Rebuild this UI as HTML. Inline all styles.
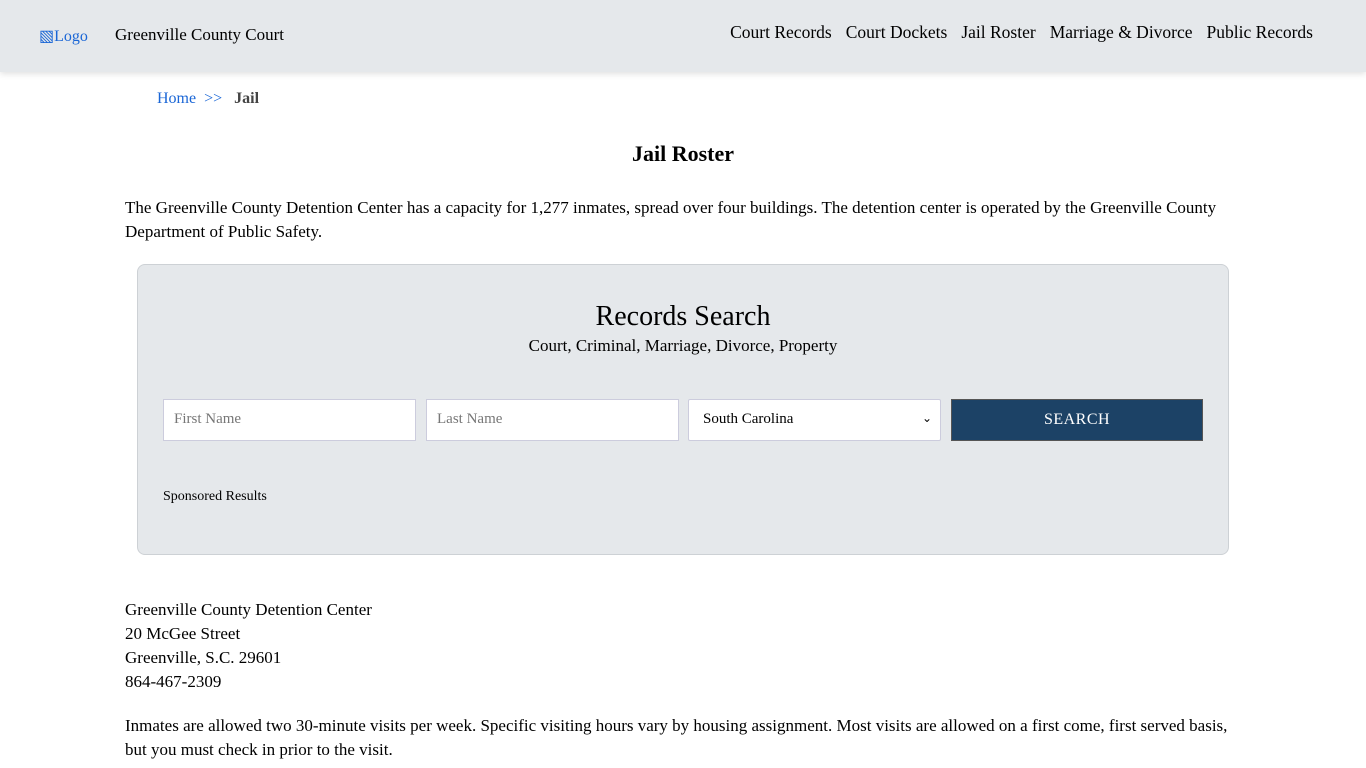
<!DOCTYPE html>
<html><head><meta charset="utf-8"><style>
*{box-sizing:border-box;margin:0;padding:0}
body{width:1366px;height:768px;overflow:hidden;background:#fff;font-family:"Liberation Serif",serif;color:#000;position:relative}
.hdr{position:absolute;left:0;top:0;width:1366px;height:72px;background:#e5e8eb;box-shadow:0 2px 6px rgba(0,0,0,.12)}
.abs{position:absolute;white-space:nowrap}
.nav a{color:#000;text-decoration:none;font-size:17.5px;margin-left:14px}
p{font-size:17px;line-height:24px}
.box{position:absolute;left:137px;top:264px;width:1092px;height:291px;background:#e5e8eb;border:1px solid #cdd1d5;border-radius:8px}
.inp{position:absolute;top:134px;width:253px;height:42px;background:#fff;border:1px solid #ccd;font-size:15px;color:#777;padding:11px 10px}
</style></head><body>
<div class="hdr">
<span class="abs" style="left:39px;top:26px;font-size:16px;color:#1a66d6">&#9639;Logo</span>
<span class="abs" style="left:115px;top:25px;font-size:17px">Greenville County Court</span>
<div class="abs nav" style="right:53px;top:22px"><a>Court Records</a><a>Court Dockets</a><a>Jail Roster</a><a>Marriage &amp; Divorce</a><a>Public Records</a></div>
</div>
<div class="abs" style="left:157px;top:90px;font-size:16px"><span style="color:#1a66d6">Home &nbsp;&gt;&gt;</span> &nbsp;&nbsp;<b style="color:#444">Jail</b></div>
<div class="abs" style="left:0;width:1366px;text-align:center;top:141px;font-size:22px;font-weight:bold">Jail Roster</div>
<p class="abs" style="left:125px;top:196px;width:1110px;white-space:normal">The Greenville County Detention Center has a capacity for 1,277 inmates, spread over four buildings. The detention center is operated by the Greenville County Department of Public Safety.</p>
<div class="box">
<div class="abs" style="left:0;width:1090px;text-align:center;top:36px;font-size:28px">Records Search</div>
<div class="abs" style="left:0;width:1090px;text-align:center;top:71px;font-size:17px">Court, Criminal, Marriage, Divorce, Property</div>
<div class="inp" style="left:25px">First Name</div>
<div class="inp" style="left:288px">Last Name</div>
<div class="inp" style="left:550px;color:#000;border-radius:2px;padding-left:14px">South Carolina<span style="position:absolute;right:8px;top:11px;font-size:12px">&#8964;</span></div>
<div class="inp" style="left:813px;width:252px;background:#1c4266;border:1px solid #555;color:#fff;text-align:center;font-size:16px;letter-spacing:.5px">SEARCH</div>
<div class="abs" style="left:25px;top:224px;font-size:14px">Sponsored Results</div>
</div>
<p class="abs" style="left:125px;top:598px">Greenville County Detention Center<br>20 McGee Street<br>Greenville, S.C. 29601<br>864-467-2309</p>
<p class="abs" style="left:125px;top:714px;width:1110px;white-space:normal">Inmates are allowed two 30-minute visits per week. Specific visiting hours vary by housing assignment. Most visits are allowed on a first come, first served basis, but you must check in prior to the visit.</p>
</body></html>
